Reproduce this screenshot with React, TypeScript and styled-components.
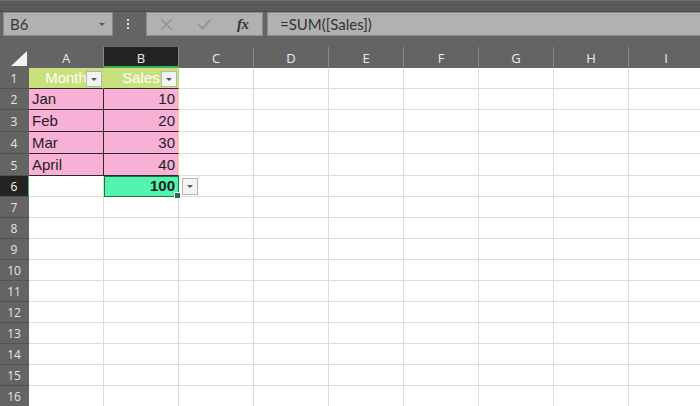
import React from 'react';
import styled, {createGlobalStyle} from 'styled-components';

const GlobalStyle = createGlobalStyle`
  html, body {
    margin: 0;
    padding: 0;
    background: #ffffff;
    overflow: hidden;
  }
`;

const colors = {
  chrome: '#646464',
  strip: '#5a5a5a',
  bar: '#b1b1b1',
  barBorder: '#8c8c8c',
  activeHead: '#232323',
  grid: '#dcdcdc',
  headFill: '#c9e17d',
  dataFill: '#f8b0d6',
  totalFill: '#52f4ae',
  excelGreen: '#217346',
};

const Shell = styled.div`
  width: 700px;
  height: 406px;
  overflow: hidden;
  display: flex;
  flex-direction: column;
  background: #fff;
`;

const TopBar = styled.div`
  background: ${colors.chrome};
  padding-bottom: 11px;
`;

const Strip = styled.div`
  height: 10px;
  background: ${colors.strip};
  border-top: 1px solid #6e6e6e;
  border-bottom: 1px solid #484848;
`;

const FormulaRow = styled.div`
  display: flex;
  align-items: stretch;
  height: 24px;
`;

const NameBox = styled.div`
  margin-left: 3px;
  width: 110px;
  box-sizing: border-box;
  border: 1px solid ${colors.barBorder};
  background: ${colors.bar};
  display: flex;
  align-items: center;
  justify-content: space-between;
  padding: 0 7px 0 6px;
  font-family: Lato, "Open Sans", sans-serif;
  font-size: 15px;
  color: #3a3a3a;
`;

const Caret = styled.span`
  width: 0;
  height: 0;
  border-left: 3px solid transparent;
  border-right: 3px solid transparent;
  border-top: 3px solid #555;
`;

const Dots = styled.div`
  width: 6px;
  margin: 0 15px 0 12px;
  display: flex;
  flex-direction: column;
  align-items: center;
  justify-content: center;
  gap: 2px;

  span {
    width: 2px;
    height: 2px;
    background: #e6e6e6;
  }
`;

const FxGroup = styled.div`
  width: 117px;
  box-sizing: border-box;
  border: 1px solid ${colors.barBorder};
  background: ${colors.bar};
  display: grid;
  grid-template-columns: repeat(3, 1fr);
  margin-right: 4px;
`;

const FxButton = styled.div`
  display: flex;
  align-items: center;
  justify-content: center;
`;

const FxLabel = styled.span`
  font-family: "Liberation Serif", "Times New Roman", serif;
  font-style: italic;
  font-weight: bold;
  font-size: 15px;
  color: #333;
  letter-spacing: -0.5px;
`;

const FormulaInput = styled.div`
  flex: 1;
  box-sizing: border-box;
  border: 1px solid ${colors.barBorder};
  border-right: none;
  background: ${colors.bar};
  display: flex;
  align-items: center;
  padding-left: 12px;
  font-family: Lato, "Open Sans", sans-serif;
  font-size: 15px;
  color: #333;
`;

const Sheet = styled.div`
  display: grid;
  grid-template-columns: 29px repeat(9, 75px);
  grid-template-rows: 21px 21px 21px 22px 22px 22px 21px repeat(10, 21px);
`;

const Corner = styled.div`
  background: ${colors.chrome};
  display: flex;
  align-items: flex-end;
  justify-content: flex-end;
  padding: 0 2px 2px 0;
`;

const ColHead = styled.div<{$active?: boolean}>`
  box-sizing: border-box;
  background: ${p => (p.$active ? colors.activeHead : colors.chrome)};
  border-right: 1px solid #8a8a8a;
  border-bottom: 2px solid ${p => (p.$active ? '#3fae5a' : colors.chrome)};
  display: flex;
  align-items: center;
  justify-content: center;
  padding-top: 2px;
  font-family: "Open Sans", "DejaVu Sans", sans-serif;
  font-size: 13px;
  color: #ececec;
`;

const RowHead = styled.div<{$active?: boolean}>`
  box-sizing: border-box;
  background: ${p => (p.$active ? colors.activeHead : colors.chrome)};
  border-bottom: 1px solid #525252;
  border-right: 1px solid ${p => (p.$active ? '#3fae5a' : colors.chrome)};
  display: flex;
  align-items: flex-end;
  justify-content: center;
  padding-bottom: 1px;
  font-family: "Open Sans", "DejaVu Sans", sans-serif;
  font-size: 12px;
  color: ${p => (p.$active ? '#ffffff' : '#e4e4e4')};
`;

type Kind = 'blank' | 'head' | 'data' | 'total';
type Align = 'left' | 'right' | 'center';

const fills: Record<Kind, string> = {
  blank: '#ffffff',
  head: colors.headFill,
  data: colors.dataFill,
  total: colors.totalFill,
};

const Cell = styled.div<{$kind: Kind; $align: Align; $edge?: boolean}>`
  position: relative;
  box-sizing: border-box;
  min-width: 0;
  overflow: visible;
  display: flex;
  align-items: flex-end;
  justify-content: ${p =>
    p.$align === 'right' ? 'flex-end' : p.$align === 'center' ? 'center' : 'flex-start'};
  padding: 0 3px 0 3px;
  background: ${p => fills[p.$kind]};
  font-family: "Liberation Sans", Arial, sans-serif;
  font-size: 15px;
  line-height: 20px;
  white-space: nowrap;
  color: ${p => (p.$kind === 'head' ? '#ffffff' : '#1e1e1e')};
  font-weight: ${p => (p.$kind === 'total' ? 'bold' : 'normal')};
  border-right: 1px solid
    ${p =>
      p.$kind === 'head'
        ? colors.headFill
        : p.$kind === 'data'
          ? p.$edge
            ? '#f3d18e'
            : '#2a2a2a'
          : colors.grid};
  border-bottom: 1px solid
    ${p => (p.$kind === 'head' || p.$kind === 'data' ? '#2a2a2a' : colors.grid)};
  ${p =>
    p.$kind === 'total' &&
    `
    outline: 1px solid ${colors.excelGreen};
    outline-offset: -1px;
    border-right-color: ${colors.excelGreen};
    border-bottom-color: ${colors.excelGreen};
  `}
`;

const Label = styled.span`
  display: block;
  overflow: hidden;
`;

const DropButton = styled.div<{$side: 'inside' | 'outside'}>`
  position: absolute;
  box-sizing: border-box;
  width: 16px;
  height: ${p => (p.$side === 'inside' ? '16px' : '17px')};
  top: ${p => (p.$side === 'inside' ? '3px' : '2px')};
  ${p => (p.$side === 'inside' ? 'right: 1px;' : 'right: -20px;')}
  background: #f4f4f4;
  border: 1px solid #b4b4b4;
  display: flex;
  align-items: center;
  justify-content: center;
  z-index: 2;
`;

const SmallCaret = styled.span`
  width: 0;
  height: 0;
  border-left: 3px solid transparent;
  border-right: 3px solid transparent;
  border-top: 3px solid #555;
`;

const FillHandle = styled.div`
  position: absolute;
  right: -3px;
  bottom: -3px;
  width: 5px;
  height: 5px;
  background: ${colors.excelGreen};
  border: 1px solid #fff;
  box-sizing: content-box;
  z-index: 3;
`;

const columns = ['A', 'B', 'C', 'D', 'E', 'F', 'G', 'H', 'I'];

const table = [
  {month: 'Month', sales: 'Sales'},
  {month: 'Jan', sales: '10'},
  {month: 'Feb', sales: '20'},
  {month: 'Mar', sales: '30'},
  {month: 'April', sales: '40'},
];

const rowCount = 16;

type CellSpec = {kind: Kind; align: Align; text?: string; edge?: boolean};

const specFor = (row: number, col: number): CellSpec => {
  if (row === 1 && col < 2) {
    return {kind: 'head', align: 'center', text: col === 0 ? table[0].month : table[0].sales};
  }
  if (row >= 2 && row <= 5 && col < 2) {
    const r = table[row - 1];
    return col === 0
      ? {kind: 'data', align: 'left', text: r.month}
      : {kind: 'data', align: 'right', text: r.sales, edge: true};
  }
  if (row === 6 && col === 1) {
    return {kind: 'total', align: 'right', text: '100'};
  }
  return {kind: 'blank', align: 'left'};
};

const CrossIcon = () => (
  <svg width="13" height="13" viewBox="0 0 13 13">
    <path d="M1.5 1.5 L11.5 11.5 M11.5 1.5 L1.5 11.5" stroke="#8f8f8f" strokeWidth="1.3" fill="none" />
  </svg>
);

const CheckIcon = () => (
  <svg width="15" height="12" viewBox="0 0 15 12">
    <path d="M1.5 6.5 L5.5 10.5 L13.5 1.5" stroke="#8f8f8f" strokeWidth="1.6" fill="none" />
  </svg>
);

const CornerTriangle = () => (
  <svg width="16" height="15" viewBox="0 0 16 15">
    <polygon points="0,15 16,15 16,0" fill="#f2f2f2" />
  </svg>
);

export default function App() {
  const rows = Array.from({length: rowCount}, (_, i) => i + 1);

  return (
    <Shell>
      <GlobalStyle />
      <TopBar>
        <Strip />
        <FormulaRow>
          <NameBox>
            B6
            <Caret />
          </NameBox>
          <Dots>
            <span />
            <span />
            <span />
          </Dots>
          <FxGroup>
            <FxButton>
              <CrossIcon />
            </FxButton>
            <FxButton>
              <CheckIcon />
            </FxButton>
            <FxButton>
              <FxLabel>fx</FxLabel>
            </FxButton>
          </FxGroup>
          <FormulaInput>=SUM([Sales])</FormulaInput>
        </FormulaRow>
      </TopBar>
      <Sheet>
        <Corner>
          <CornerTriangle />
        </Corner>
        {columns.map(c => (
          <ColHead key={c} $active={c === 'B'}>
            {c}
          </ColHead>
        ))}
        {rows.map(r => (
          <React.Fragment key={r}>
            <RowHead $active={r === 6}>{r}</RowHead>
            {columns.map((c, ci) => {
              const s = specFor(r, ci);
              return (
                <Cell key={c} $kind={s.kind} $align={s.align} $edge={s.edge}>
                  {s.text && <Label>{s.text}</Label>}
                  {s.kind === 'head' && (
                    <DropButton $side="inside">
                      <SmallCaret />
                    </DropButton>
                  )}
                  {s.kind === 'total' && (
                    <>
                      <DropButton $side="outside">
                        <SmallCaret />
                      </DropButton>
                      <FillHandle />
                    </>
                  )}
                </Cell>
              );
            })}
          </React.Fragment>
        ))}
      </Sheet>
    </Shell>
  );
}
